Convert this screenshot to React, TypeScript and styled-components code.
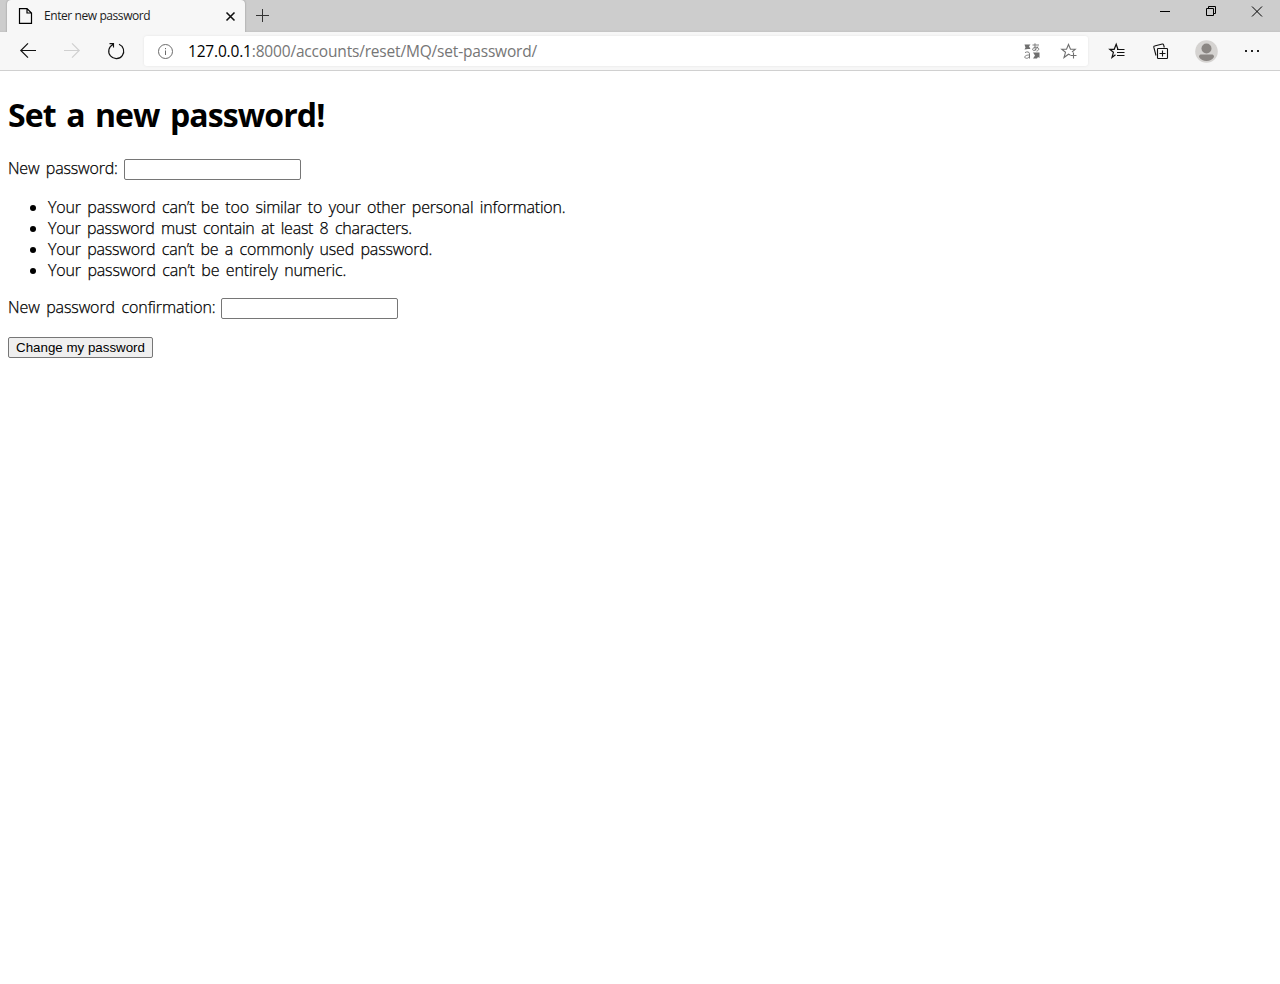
import React from 'react';
import styled, { createGlobalStyle } from 'styled-components';

const Global = createGlobalStyle`
  html, body { margin: 0; background: #fff; }
  * { box-sizing: border-box; }
`;

const uiFont = `'Open Sans', 'Noto Sans', sans-serif`;

const Window = styled.div`
  width: 1280px;
  height: 984px;
  display: flex;
  flex-direction: column;
  background: #fff;
  overflow: hidden;
`;

const TabStrip = styled.header`
  height: 32px;
  display: flex;
  padding-left: 7px;
  background: linear-gradient(#cdcdcd 0 30px, #c8c8c8 31px, #c4c4c4 32px);
`;

const Tab = styled.div`
  width: 238px;
  height: 32px;
  display: flex;
  align-items: center;
  padding: 0 7px 0 11px;
  background: #f7f7f7;
  border-radius: 4px 4px 0 0;
  box-shadow: 0 0 2px rgba(0, 0, 0, 0.35);
`;

const TabTitle = styled.span`
  flex: 1;
  margin-left: 11px;
  font: 400 12px/16px ${uiFont};
  letter-spacing: -0.42px;
  color: #1b1b1b;
  white-space: nowrap;
`;

const NewTab = styled.div`
  width: 35px;
  padding-bottom: 1px;
  display: flex;
  align-items: center;
  justify-content: center;
`;

const WindowButtons = styled.div`
  margin-left: auto;
  height: 23px;
  display: flex;
`;

const WindowButton = styled.div`
  width: 46px;
  display: flex;
  align-items: center;
  justify-content: center;
`;

const Toolbar = styled.nav`
  height: 39px;
  display: flex;
  align-items: center;
  padding-left: 6px;
  background: #f7f7f7;
  border-bottom: 1px solid #d0d0d0;
`;

const ToolButton = styled.div<{ $w?: number }>`
  width: ${p => p.$w ?? 44}px;
  height: 38px;
  flex: none;
  display: flex;
  align-items: center;
  justify-content: center;
`;

const AddressBar = styled.div`
  width: 944px;
  height: 30px;
  margin-left: 6px;
  display: flex;
  align-items: center;
  padding: 0 1px 0 13px;
  background: #fff;
  border-radius: 3px;
  box-shadow: 0 0 3px rgba(0, 0, 0, 0.08);
`;

const Url = styled.span`
  flex: 1;
  margin-left: 14px;
  font: 400 15.5px/20px ${uiFont};
  letter-spacing: -0.18px;
  color: #767676;
  white-space: nowrap;
`;

const Host = styled.span`
  color: #000;
`;

const Page = styled.main`
  flex: 1;
  padding: 0 8px;
  font: 300 16px/21px ${uiFont};
  color: #000;
`;

const Heading = styled.h1`
  margin: 22px 0;
  font: 700 32px/44px ${uiFont};
  letter-spacing: -0.9px;
  word-spacing: 3px;
  white-space: nowrap;
`;

const Field = styled.div`
  height: 21px;
  display: flex;
`;

const Text = styled.span<{ $ls: number }>`
  white-space: nowrap;
  letter-spacing: ${p => p.$ls}px;
  word-spacing: 2.5px;
  -webkit-text-stroke: 0.25px #000;
`;

const Label = styled.label<{ $w: number }>`
  width: ${p => p.$w}px;
  height: 19px;
  line-height: 19px;
  flex: none;
`;

const PasswordInput = styled.input`
  width: 177px;
  height: 21px;
  padding: 1px 2px;
  border: 1px solid #767676;
  border-radius: 2px;
  background: #fff;
`;

const Rules = styled.ul`
  margin: 17px 0;
  padding-left: 40px;
`;

const Rule = styled.li`
  height: 21px;
`;

const Submit = styled.button`
  display: block;
  width: 145px;
  height: 21px;
  margin-top: 18px;
  padding: 0;
  border: 1px solid #767676;
  border-radius: 2px;
  background: #efefef;
  color: #000;
  font: 400 13.333px/17px 'Liberation Sans', Arial, sans-serif;
  white-space: nowrap;
`;

const Glyph = styled.svg`
  display: block;
  flex: none;
  fill: none;
  overflow: visible;
`;

const rules = [
  { text: 'Your password can’t be too similar to your other personal information.', ls: -0.17 },
  { text: 'Your password must contain at least 8 characters.', ls: -0.24 },
  { text: 'Your password can’t be a commonly used password.', ls: -0.19 },
  { text: 'Your password can’t be entirely numeric.', ls: -0.15 },
];

export default function App() {
  return (
    <Window>
      <Global />
      <TabStrip>
        <Tab>
          <Glyph width="15" height="16" stroke="#000" strokeWidth="1.2">
            <path d="M1.5 .6H9L13.5 5V15.4H1.5ZM9 .6V5H13.5" />
          </Glyph>
          <TabTitle>Enter new password</TabTitle>
          <Glyph width="15" height="16" stroke="#111" strokeWidth="1.6">
            <path d="M3.5 4.5l8 8M11.5 4.5l-8 8" />
          </Glyph>
        </Tab>
        <NewTab>
          <Glyph width="13" height="13" stroke="#333" strokeWidth="1">
            <path d="M6.5 0v13M0 6.5h13" />
          </Glyph>
        </NewTab>
        <WindowButtons>
          <WindowButton>
            <Glyph width="10" height="11" stroke="#000"><path d="M0 5.5h10" /></Glyph>
          </WindowButton>
          <WindowButton>
            <Glyph width="10" height="11" stroke="#000">
              <path d="M.5 2.5h7v7h-7zM2.5 2.5v-2h7v7h-2" />
            </Glyph>
          </WindowButton>
          <WindowButton>
            <Glyph width="10" height="11" stroke="#000"><path d="M0 .5l10 10M10 .5l-10 10" /></Glyph>
          </WindowButton>
        </WindowButtons>
      </TabStrip>
      <Toolbar>
        <ToolButton>
          <Glyph width="16" height="16" stroke="#111" strokeWidth="1.2">
            <path d="M16 7.5H.8M8 .3L.8 7.5l7.2 7.2" />
          </Glyph>
        </ToolButton>
        <ToolButton>
          <Glyph width="16" height="16" stroke="#d0d0d0" strokeWidth="1.2">
            <path d="M0 7.5h15.2M8 .3l7.2 7.2L8 14.7" />
          </Glyph>
        </ToolButton>
        <ToolButton>
          <Glyph width="16" height="16" stroke="#111" strokeWidth="1.15">
            <path d="M11 1.2A7.5 7.5 0 1 1 5 1.4M1.5 .6H5.5V4.6" />
          </Glyph>
        </ToolButton>
        <AddressBar>
          <Glyph width="17" height="17" stroke="#6b6b6b">
            <circle cx="8.5" cy="8.5" r="7" />
            <path d="M8.5 7.5v4.5M8.5 5v1.2" />
          </Glyph>
          <Url><Host>127.0.0.1</Host>:8000/accounts/reset/MQ/set-password/</Url>
          <ToolButton $w={37}>
            <Glyph width="16" height="16" stroke="#6f6f6f" strokeWidth=".9">
              <path d="M8.5 2H15M11 .3c-.2 3.200 0 5.500.6 7M13.800 3.500c-.8 2.500-2.400 4-4 4-2 0-1.400-3.300 2-3.300 3.800 0 3.800 3.300.7 3.900M1 9.600c2-1.300 4.500-.8 4.500 1.200v4.700M5.500 12c-5.500-.2-5.800 3.300-3 3.300 1.600 0 3-1.100 3-2.300" />
              <path d="M.5 1.500H6.500L5 3.200 6.500 6H4L.5 6.500 1.500 4.500ZM9 9.500H15.500V15l-1.500-1-1 1.500H9l2-3z" fill="#6f6f6f" stroke="none" />
            </Glyph>
          </ToolButton>
          <ToolButton $w={37}>
            <Glyph width="16" height="16" stroke="#6f6f6f" strokeWidth="1.1">
              <path d="M9.3 12L7.5 11.2 3 14.500 4.500 9.300.8 6.300H5.500L7.500 1.500l2 4.800h4.700L11 9M12.500 9.500v6M9.500 12.500h6" />
            </Glyph>
          </ToolButton>
        </AddressBar>
        <ToolButton $w={57}>
          <Glyph width="16" height="16" stroke="#111" strokeWidth="1.2">
            <path d="M6.5 11.7L3 14.5 4.4 9.3.8 6.3H5.2L7.2 1.3 9 6.5" />
            <path d="M8 6.5H15.5M8 9.5H15.5M8 12.5H15.5" />
          </Glyph>
        </ToolButton>
        <ToolButton $w={32}>
          <Glyph width="16" height="16" stroke="#111" strokeWidth="1.1">
            <rect x="4.5" y="5.5" width="10" height="10" rx=".7" />
            <path d="M9.5 7.5v6M6.5 10.5h6M3 12.5L.8 4.2Q.6 3.2 1.5 3L9.3 1Q10.3.8 10.6 1.8L11.3 4.5" />
          </Glyph>
        </ToolButton>
        <ToolButton $w={58}>
          <Glyph width="23" height="23">
            <circle cx="11.5" cy="11.5" r="11.3" fill="#d5d3d1" />
            <circle cx="11.5" cy="8.5" r="5" fill="#8a8683" />
            <path d="M4 17c0-2 1-2.5 2.5-2.5h10c1.5 0 2.5.5 2.5 2.5-1.500 2.500-4.500 4-7.500 4S5.500 19.500 4 17z" fill="#8a8683" />
          </Glyph>
        </ToolButton>
        <ToolButton $w={34}>
          <Glyph width="14" height="2">
            <path d="M0 0h2v2H0zM6 0h2v2H6zM12 0h2v2h-2z" fill="#222" />
          </Glyph>
        </ToolButton>
      </Toolbar>
      <Page>
        <Heading>Set a new password!</Heading>
        <Field>
          <Label $w={116}><Text $ls={-0.17}>New password:</Text></Label>
          <PasswordInput type="password" />
        </Field>
        <Rules>
          {rules.map(r => (
            <Rule key={r.text}><Text $ls={r.ls}>{r.text}</Text></Rule>
          ))}
        </Rules>
        <Field>
          <Label $w={213}><Text $ls={-0.1}>New password confirmation:</Text></Label>
          <PasswordInput type="password" />
        </Field>
        <Submit type="button">Change my password</Submit>
      </Page>
    </Window>
  );
}
